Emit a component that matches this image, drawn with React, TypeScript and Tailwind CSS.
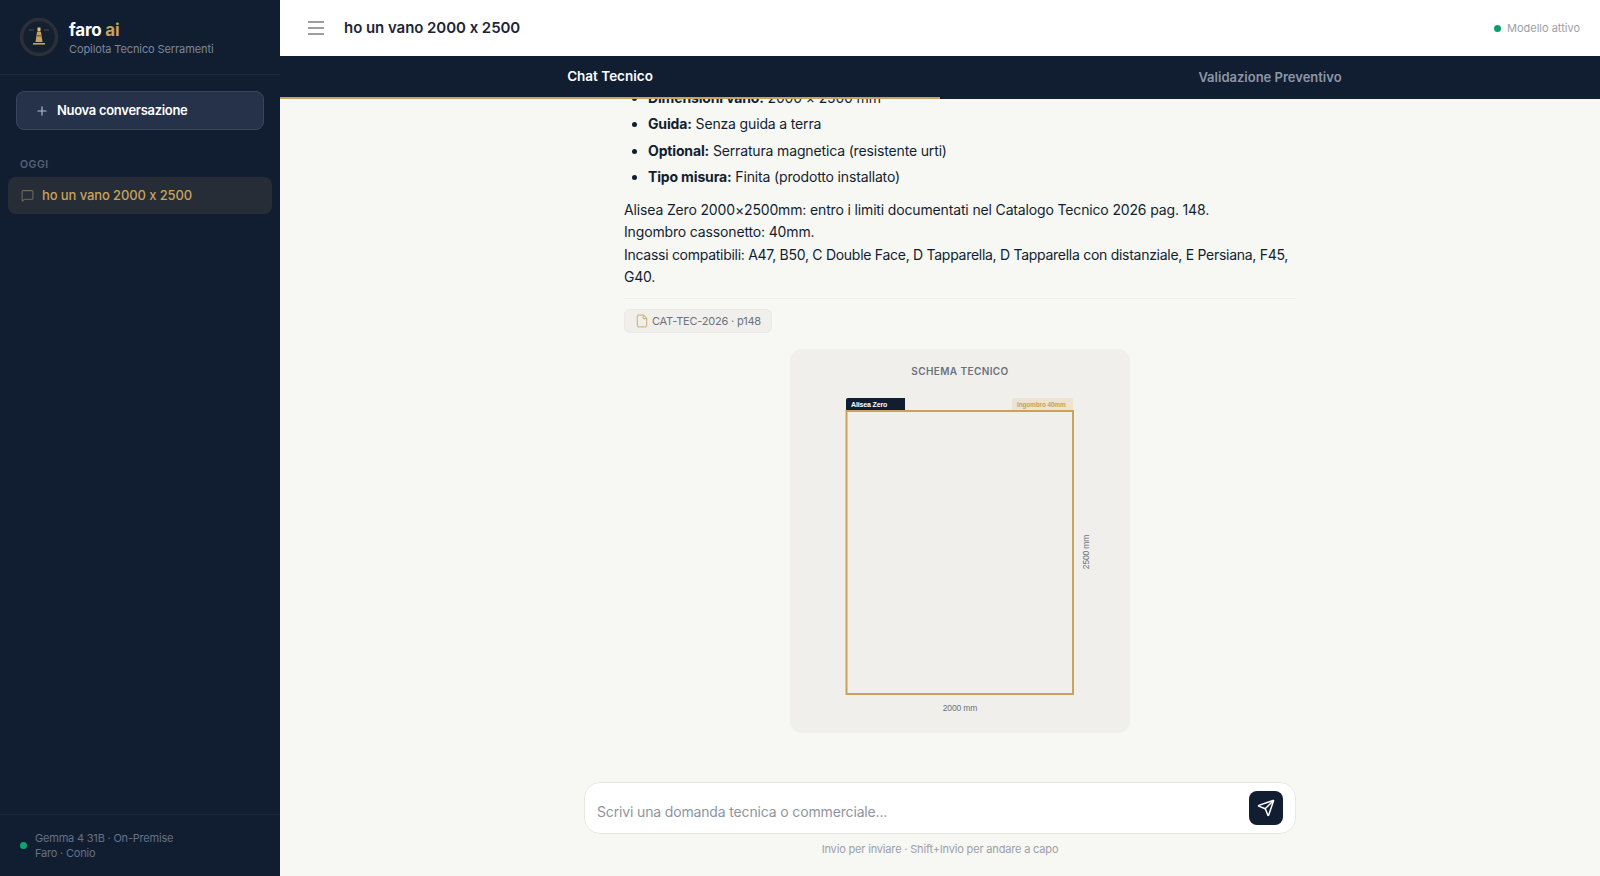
import { File, MessageSquare, Plus, Send } from 'lucide-react';

const details = [
  { label: 'Dimensioni vano:', value: '2000 × 2500 mm' },
  { label: 'Guida:', value: 'Senza guida a terra' },
  { label: 'Optional:', value: 'Serratura magnetica (resistente urti)' },
  { label: 'Tipo misura:', value: 'Finita (prodotto installato)' }
];

function Logo() {
  return (
    <svg width="40" height="40" viewBox="0 0 40 40" className="shrink-0">
      <circle cx="20" cy="20" r="17.5" fill="#141f30" stroke="#2b3038" strokeWidth="3.5" />
      <path d="M10 13h5M25 13h5" stroke="#4b4f50" strokeWidth="1" />
      <path d="M18.5 10.5h3v4h-3z" fill="#e3c078" />
      <path d="M18 15h4l1.5 10h-7z" fill="#c9a25c" />
      <path d="M17.4 18h5.2v1.6h-5.2z" fill="#7b6a45" />
      <path d="M14 26h12v1.6H14z" fill="#c9a25c" />
    </svg>
  );
}

function Sidebar() {
  return (
    <aside className="w-[280px] shrink-0 bg-[#111e32] flex flex-col">
      <div className="h-[75px] flex items-center gap-[10px] pl-[19px] border-b border-white/5">
        <Logo />
        <div className="pt-[3px]">
          <div className="text-[17px] leading-[21px] font-bold text-white tracking-[-0.2px]">
            faro <span className="text-[#c9a25c]">ai</span>
          </div>
          <div className="text-[11px] leading-[16px] tracking-[-0.1px] text-[#7d8798]">Copilota Tecnico Serramenti</div>
        </div>
      </div>

      <div className="px-4 pt-4">
        <button className="w-full h-[39px] flex items-center gap-2 px-[18px] rounded-lg bg-[#25324a] border border-[#39455a] text-white text-[13px] tracking-[-0.3px] font-semibold">
          <Plus size={14} className="text-[#b6bcc6]" />
          Nuova conversazione
        </button>
      </div>

      <div className="px-5 mt-[28px] text-[10.5px] leading-[14px] font-semibold tracking-wider text-[#566174]">OGGI</div>

      <div className="mx-2 mt-[5px] h-[37px] flex items-center gap-2 px-[13px] rounded-lg bg-[#262d37] text-[#c9a25c] text-[13px] tracking-[-0.1px] font-medium [font-feature-settings:'calt'_0]">
        <MessageSquare size={13} className="text-[#6e6a58]" />
        ho un vano 2000 x 2500
      </div>

      <div className="mt-auto h-[62px] flex items-center gap-2 px-5 border-t border-white/5">
        <span className="w-[7px] h-[7px] rounded-full bg-[#10a36f]" />
        <div className="text-[11px] leading-[15px] tracking-[-0.2px] text-[#667183]">
          <div>Gemma 4 31B · On-Premise</div>
          <div>Faro · Conio</div>
        </div>
      </div>
    </aside>
  );
}

function Schema() {
  return (
    <div className="w-[340px] h-[384px] mx-auto mt-[15px] rounded-xl bg-[#f0efeb]">
      <div className="pt-[15px] text-center text-[10px] leading-[14px] font-semibold tracking-[0.4px] text-[#6b7280]">
        SCHEMA TECNICO
      </div>
      <svg width="340" height="340" viewBox="0 0 340 340" className="block mt-px" style={{ fontFamily: '"Liberation Sans", sans-serif' }}>
        <path d="M56 21a2 2 0 0 1 2-2h57v13H56z" fill="#111e32" />
        <text x="61" y="28" fontSize="7" fontWeight="700" fill="#fff">Alisea Zero</text>
        <path d="M222 21a2 2 0 0 1 2-2h57a2 2 0 0 1 2 2v11h-61z" fill="#ece3d1" />
        <text x="227" y="28" fontSize="6.5" fontWeight="700" fill="#c9a25c">Ingombro 40mm</text>
        <rect x="56.5" y="32" width="226.5" height="283" fill="#f0efeb" stroke="#c9a25c" strokeWidth="2" />
        <text x="170" y="332" fontSize="8.5" textAnchor="middle" fill="#6b7280">2000 mm</text>
        <text transform="translate(299 173) rotate(-90)" fontSize="8.5" textAnchor="middle" fill="#6b7280">2500 mm</text>
      </svg>
    </div>
  );
}

export default function App() {
  return (
    <div className="h-screen flex overflow-hidden bg-[#f7f7f3] text-[#111e32]" style={{ fontFamily: 'Inter, sans-serif' }}>
      <Sidebar />

      <main className="flex-1 min-w-0 flex flex-col">
        <header className="h-[56px] shrink-0 bg-white flex items-center pl-6 pr-5">
          <svg width="24" height="24" viewBox="0 0 24 24" fill="none" stroke="#7c7f85" strokeWidth="1.6" className="mr-4">
            <path d="M4 6h16M4 12h16M4 18h16" />
          </svg>
          <h1 className="text-[15px] tracking-[-0.05px] font-semibold text-[#1c2638] [font-feature-settings:'calt'_0]">ho un vano 2000 x 2500</h1>
          <div className="ml-auto flex items-center gap-[6px] text-[11px] text-[#9aa0aa]">
            <span className="w-[7px] h-[7px] rounded-full bg-[#0d9e6b]" />
            Modello attivo
          </div>
        </header>

        <nav className="h-[43px] shrink-0 bg-[#111e32] flex font-semibold">
          <div className="flex-1 flex items-center justify-center text-[13.5px] text-white border-b-2 border-[#c9a25c]">Chat Tecnico</div>
          <div className="flex-1 flex items-center justify-center text-[13px] text-[#8d96a5]">Validazione Preventivo</div>
        </nav>

        <section className="flex-1 min-h-0 overflow-hidden flex flex-col justify-end">
          <div className="w-[712px] mx-auto pl-10 pb-[49px] text-[14px] tracking-[-0.15px] leading-[22.5px]">
            <ul className="list-disc pl-6 flex flex-col gap-1">
              {details.map((item) => (
                <li key={item.label}>
                  <strong className="font-bold">{item.label}</strong> {item.value}
                </li>
              ))}
            </ul>
            <p className="mt-[10px]">
              Alisea Zero 2000×2500mm: entro i limiti documentati nel Catalogo Tecnico 2026 pag. 148.
              <br />
              Ingombro cassonetto: 40mm.
              <br />
              <span className="tracking-[-0.28px]">
                Incassi compatibili: A47, B50, C Double Face, D Tapparella, D Tapparella con distanziale, E Persiana, F45, G40.
              </span>
            </p>
            <div className="mt-[9px] pt-[10px] border-t border-[#efeeea]">
              <span className="inline-flex items-center gap-[3px] h-[24px] px-[10px] rounded-md bg-[#f0efeb] border border-[#ebeae5] text-[11px] tracking-[-0.2px] text-[#6b7280]">
                <File size={14} className="text-[#d3b77f]" />
                <span className="pt-px">CAT-TEC-2026 · p148</span>
              </span>
            </div>
            <Schema />
          </div>
        </section>

        <footer className="shrink-0 pb-[19px]">
          <div className="w-[712px] mx-auto h-[52px] flex items-center pl-3 pr-[12px] bg-white border border-[#e9e8e3] rounded-2xl">
            <span className="flex-1 pt-[6px] text-[14px] tracking-[-0.15px] text-[#8f95a0]">Scrivi una domanda tecnica o commerciale...</span>
            <button className="w-[34px] h-[34px] flex items-center justify-center rounded-lg bg-[#111e32] text-white">
              <Send size={18} />
            </button>
          </div>
          <div className="mt-2 text-center text-[11px] leading-[15px] tracking-[-0.17px] text-[#9aa0aa]">Invio per inviare · Shift+Invio per andare a capo</div>
        </footer>
      </main>
    </div>
  );
}
